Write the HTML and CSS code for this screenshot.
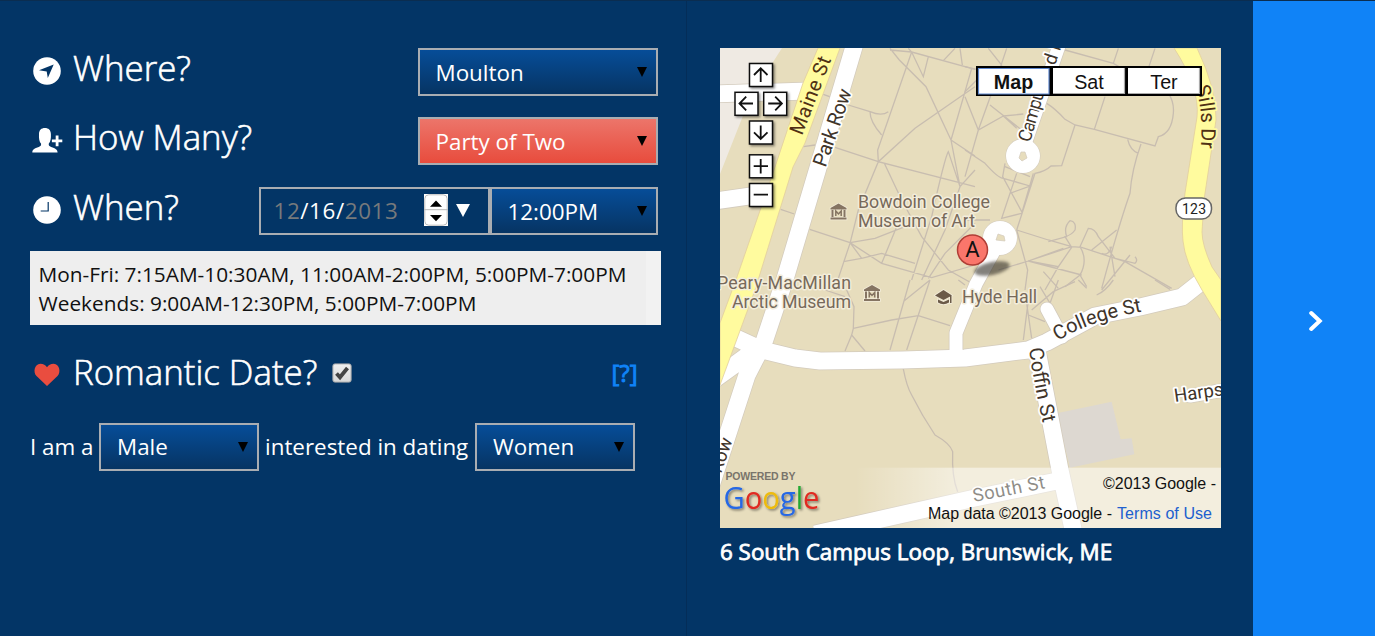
FILE: index.html
```html
<!DOCTYPE html>
<html lang="en">
<head>
<meta charset="utf-8">
<title>Plan a meal</title>
<link rel="stylesheet" href="styles.css">
</head>
<body>
<main class="page">
  <section class="form">
    <div class="row row-where">
      <h2 class="label"><svg class="icon" viewBox="0 0 30 30"><circle cx="15" cy="15" r="13.8" fill="#fff"/><path d="M21.7 8.5 15.8 22 14.7 15.5 7 14.2Z" fill="#033566"/></svg>Where?</h2>
      <div class="select w240"><span>Moulton</span><i class="caret"></i></div>
    </div>
    <div class="row row-many">
      <h2 class="label"><svg class="icon" viewBox="0 0 30 30"><path d="M.3 27.5c0-3.4 2.200-4 6.500-5.600 2-.8 2.300-1.300 2.300-3.100C7.200 16.800 6.800 13.500 7 9c.1-4 2.300-6 5.900-6s5.900 2 6 6c.2 4.500-.3 7.800-2.200 9.800 0 1.800.5 2.300 2.400 3.100 4.300 1.600 6.400 2.200 6.500 5.600Z" fill="#fff"/><path d="M23.700 10.500h2.800v4h3.800v2.800h-3.800v4h-2.800v-4h-3.800v-2.800h3.800Z" fill="#fff"/></svg>How Many?</h2>
      <div class="select w240 red"><span>Party of Two</span><i class="caret"></i></div>
    </div>
    <div class="row row-when">
      <h2 class="label"><svg class="icon" viewBox="0 0 30 30"><circle cx="15" cy="15" r="13.800" fill="#fff"/><path d="M16.200 7v9H8.700" fill="none" stroke="#033566" stroke-width="1.200"/></svg>When?</h2>
      <div class="datetime">
        <div class="date"><span class="value"><b>12</b>/16/<b>2013</b></span>
          <svg class="spin" viewBox="0 0 24 32"><rect width="24" height="32" fill="#fff"/><rect x=".8" y=".8" width="22.400" height="30.400" rx="4" fill="#fff" stroke="#bbb"/><path d="M0 15.700h24" stroke="#bbb"/><path d="M6 12.700 12 6.500l6 6.200ZM6 21h12l-6 6.200Z"/></svg>
          <i class="drop"></i></div>
        <div class="select w168"><span>12:00PM</span><i class="caret"></i></div>
      </div>
    </div>
    <div class="hours"><div class="lines">Mon-Fri: 7:15AM-10:30AM, 11:00AM-2:00PM, 5:00PM-7:00PM<br>Weekends: 9:00AM-12:30PM, 5:00PM-7:00PM</div></div>
    <div class="row row-romance">
      <h2 class="label"><svg class="icon heart" viewBox="0 0 30 30"><path d="M15 27 4.500 17C.8 13 2.500 5 8.300 4.700c3.200 0 5.200 1.300 6.700 3.600 1.500-2.300 3.500-3.600 6.700-3.600 5.800.3 7.500 8.300 3.800 12.300Z" fill="#e94d3f"/></svg>Romantic Date?</h2>
      <svg class="check" viewBox="0 0 20 20"><defs><linearGradient id="cg" x2="0" y2="1"><stop stop-color="#f0f0f0"/><stop offset="1" stop-color="#d8d8d8"/></linearGradient></defs><rect x=".9" y=".9" width="18.200" height="18.200" rx="2" fill="url(#cg)" stroke="#aaa"/><path d="M4.500 10.500 8 14.300 15.500 5" fill="none" stroke="#444" stroke-width="3.800"/></svg>
      <a class="help">[?]</a>
    </div>
    <div class="dating"><span>I am a</span><div class="select w160"><span>Male</span><i class="caret"></i></div><span class="mid">interested in dating</span><div class="select w160"><span>Women</span><i class="caret"></i></div></div>
  </section>

  <section class="place">
    <svg class="map" viewBox="720 48 501 480">
      <defs>
        <linearGradient id="fade"><stop offset="0" stop-color="#fff" stop-opacity="0"/><stop offset=".28" stop-color="#fff" stop-opacity=".5"/><stop offset="1" stop-color="#fff" stop-opacity=".5"/></linearGradient>
        <filter id="soft" x="-30%" y="-50%" width="160%" height="200%"><feGaussianBlur stdDeviation="1.500"/></filter>
        <filter id="drop" x="-20%" y="-20%" width="150%" height="150%"><feDropShadow dx="1.500" dy="1.500" stdDeviation="1" flood-opacity=".45"/></filter>
        <g id="museum"><path d="M-8-3.500 0-8 8-3.500V-2H-8ZM-7-1.500h2v7h-2ZM5-1.500h2v7H5ZM-8 6H8v2H-8Z"/><path d="M-2.700 4.500V-.5L0 2.500 2.700-.5v5" fill="none" stroke="#857462" stroke-width="1.500"/></g>
        <path id="pSills" d="M1195.500 87 Q1206 119 1198 170"/>
        <path id="pCollege" d="M1058 341Q1089 320 1152 310"/>
        <path id="pCoffin" d="M1029 349Q1033 380 1047 442"/>
      </defs>
      <rect x="720" y="48" width="501" height="480" fill="#e7ddbd"/>
      <path d="M720 48h62L750 98 720 174Z" fill="#efeae3"/>
      <g class="paths" transform="translate(715 40) scale(.333333)">
        <path d="M525 25 553 60 633 140 708 300 735 440M525 30 590 36 780 88M590 36 488 330 490 365 780 440M580 25 590 36 625 110 640 50M685 62 720 25M735 25 742 75M780 140 748 162 600 265 490 365 430 510 405 610 370 715M770 85 748 162 708 300 780 348M325 163 350 172M400 195 465 215Q500 230 520 215M465 215Q465 245 500 285M265 320 300 315M360 322 490 365M197 508 238 522M284 568 405 608 500 670 650 713 780 675M508 370 560 480 620 590 700 690 780 735M735 440 690 570 620 720M735 440 700 335Q690 350 650 530L590 720M735 440 780 390M405 608 440 655 385 665M440 655 500 640 600 670M405 608 480 595 570 560M545 560 500 670M780 550 690 640 640 715"/>
      </g>
      <g class="paths" transform="translate(965 40) scale(.333333)">
        <path d="M0 80 150 115M70 25 110 75 40 270 0 410M125 25 100 100M0 155 60 95M0 170 40 270 115 228 155 265M75 195 170 270M115 228 175 222M245 190Q270 205 300 238L330 255 388 268 570 318 580 290Q620 280 625 220Q628 185 610 160M420 170 388 268M300 30 445 70 480 90M460 25 445 70M570 25 545 100M330 255 290 377 258 378Q240 395 210 400L155 570M488 298Q495 330 520 340M528 312Q500 390 495 460Q460 560 410 745M0 330 60 370Q100 415 115 415L195 438 135 460M120 370 113 410 170 515M155 400 110 535 170 520 205 400M120 380 195 410M75 540H0M155 570 250 600 320 620 350 622 480 665 620 745M250 605 305 590Q295 560 315 542Q335 545 330 570Q320 585 300 590L320 622M320 620 190 663 100 690M295 625 190 663M155 570 188 690 180 750M190 663 350 705M190 663 280 680 320 622M280 680 240 750M345 620Q370 660 345 705L300 740M345 620 370 565Q390 565 400 590L450 655 510 670Q520 660 510 650M410 640Q430 650 440 620M435 620 450 710M380 630 455 570M495 645 410 750M235 695 280 745M345 705 365 740"/>
      </g>
      <g class="paths" transform="translate(715 280) scale(.333333)">
        <path d="M415 145 530 120 610 107 705 137M415 145 410 165 450 213M410 165 390 213M585 0 525 210M645 0 575 210M645 0 568 62M330 30 390 50M395 30 417 80 415 145M730 0 750 15M565 267Q575 320 590 345Q620 405 660 465Q705 490 713 515Q710 590 728 635"/>
      </g>
      <g class="paths" transform="translate(965 280) scale(.333333)">
        <path d="M190 60 175 180M185 70 200 175M190 105 240 125M280 0 255 70 225 20M200 90 265 35 330 5M340 0 365 25M445 0Q420 35 395 45M570 0 615 28"/>
      </g>
      <g transform="translate(965 280) scale(.333333)"><path d="M275 400 440 365 467 478 500 475 508 523 315 563Z" fill="#ddd8d1"/></g>
      <g class="edge">
        <path d="M715 93.800 808 91M715 201 778 192M856 40 785 279 764 342 747 375 708 495M725 333 762 350 795 358 820 361 902 360 965 358 1028 350 1047 342 1095 316 1140 307 1182 297 1201 282M715 379 755 350M1037 350 1060 470 1075 538M815 534 975 498 1057 481"/>
        <path class="thin" d="M1061 40 1023 150M999 242 976 284 956 333V355M1047 309 1062 337M1190 396 1230 389"/>
        <circle cx="1023" cy="156" r="17.500"/><circle cx="1000" cy="238" r="17.500"/>
      </g>
      <g class="road">
        <path d="M715 93.800 808 91M715 201 778 192M856 40 785 279 764 342 747 375 708 495M725 333 762 350 795 358 820 361 902 360 965 358 1028 350 1047 342 1095 316 1140 307 1182 297 1201 282M715 379 755 350M1037 350 1060 470 1075 538M815 534 975 498 1057 481"/>
        <path class="thin" d="M1061 40 1023 150M999 242 976 284 956 333V355M1047 309 1062 337M1190 396 1230 389"/>
        <circle cx="1023" cy="156" r="17"/><circle cx="1000" cy="238" r="17"/>
      </g>
      <path d="M1021 152h4l2 6-5 3-3-3ZM998 234l6 2 1 5-9-1Z" fill="#e7ddbd" stroke="#d3cabb" stroke-width=".7"/>
      <path d="M818 48H840L805 143 793 167 755 290 720 385V323L737 277 773 173 803 83ZM1174 48Q1200 88 1197 117L1185 193Q1181 225 1183 241 1185 262 1202 290L1221 321V280L1212 267Q1202 245 1202 232L1204 200 1216 120Q1217 90 1197 48Z" fill="#fffb9e" stroke="#e2ce9d" stroke-width=".8"/>

      <g class="street">
        <text transform="translate(802 136) rotate(-69)" class="on-yellow big" textLength="82">Maine St</text>
        <text transform="translate(825.500 168) rotate(-71)" class="big" textLength="81">Park Row</text>
        <text transform="translate(1030 143) rotate(-74)" textLength="53">Campu</text>
        <text transform="translate(1055 66) rotate(-72)">d R</text>
        <text class="on-yellow big"><textPath href="#pSills">Sills Dr</textPath></text>
        <text class="big"><textPath href="#pCollege">College St</textPath></text>
        <text class="big"><textPath href="#pCoffin">Coffin St</textPath></text>
        <text transform="translate(1175 402) rotate(-8)">Harps</text>
        <text transform="translate(721 474) rotate(-71)">Row</text>
      </g>
      <g class="poi">
        <text x="858" y="207.500" textLength="132">Bowdoin College</text><text x="858" y="227" textLength="117">Museum of Art</text>
        <text x="717" y="289" textLength="134">Peary-MacMillan</text><text x="732" y="308" textLength="119">Arctic Museum</text>
        <text x="962" y="303" textLength="75">Hyde Hall</text>
      </g>
      <g fill="#857462" class="halo"><use href="#museum" x="838.500" y="211.500"/><use href="#museum" x="872" y="293"/></g>
      <path class="halo" d="M935 295.500 943.500 290 952 295.500 943.500 300ZM938 299.500l5.500 2.500 5.500-2.500v3q-5.500 3.500-11 0ZM950 296h1.500v7H950Z" fill="#6b5a48"/>
      <rect x="1176" y="198" width="35.500" height="21" rx="9.500" fill="#fff" stroke="#666" stroke-width="1.500"/>
      <text x="1182" y="213.500" class="shield" textLength="24">123</text>
      <ellipse cx="992" cy="268.500" rx="18" ry="6.500" transform="rotate(-12 992 268.500)" fill="#332f25" opacity=".6" filter="url(#soft)"/>
      <circle cx="972.500" cy="250" r="15" fill="#fa766b" stroke="#b03e36" stroke-width="1.500"/>
      <text x="972.500" y="257" class="pin">A</text>
      <text transform="translate(974 502) rotate(-11)" class="south" textLength="73">South St</text>
      <rect x="855" y="467.700" width="366" height="61" fill="url(#fade)"/>
      <g class="credit"><text x="1103" y="488.500" textLength="113">©2013 Google -</text><text x="928" y="519" textLength="184">Map data ©2013 Google -</text><text x="1117" y="519" fill="#2060cf" textLength="95">Terms of Use</text></g>
      <text x="725.500" y="480" class="powered" textLength="70">POWERED BY</text>
      <text x="723.500" y="508.500" class="google" filter="url(#drop)" textLength="96" lengthAdjust="spacingAndGlyphs"><tspan fill="#2567e5">G</tspan><tspan fill="#e02b20">o</tspan><tspan fill="#eebb0a">o</tspan><tspan fill="#2567e5">g</tspan><tspan fill="#22a833">l</tspan><tspan fill="#e02b20">e</tspan></text>
      <g class="control" filter="url(#drop)">
        <rect x="749.500" y="63.500" width="23" height="23"/><rect x="735" y="92.300" width="23" height="23"/><rect x="763.700" y="92.300" width="23" height="23"/><rect x="749.500" y="121" width="23" height="23"/><rect x="749.500" y="154.800" width="23" height="23"/><rect x="749.500" y="183.500" width="23" height="23"/>
      </g>
      <path class="glyph" d="M760.700 82V68.500M754 75l6.700-6.700L767.500 75M753 103.500H739.500M746.200 96.700l-6.700 6.800 6.700 6.800M768.200 103.500H782M775.200 96.700l6.700 6.800-6.700 6.800M760.700 125.500V139M754 132.300l6.700 6.700 6.800-6.700M753.700 166.200H768M760.700 159V173.500M753.700 194.700H768"/>
      <g class="types">
        <path d="M976 66h226v30H976Z" fill="#000"/>
        <path d="M978 68h71v26h-71ZM1053 68h71v26h-71ZM1128 68h72v26h-72Z" fill="#fff"/>
        <path d="M978.500 68.500h70.500v25.500h-70.500Z" fill="none" stroke="#6089cf" stroke-width="1.200"/>
        <path d="M1053 93.500h71.500V68M1128 93.500h71.500V68" fill="none" stroke="#aaa" stroke-width="1.200"/>
        <text x="1013.500" y="88.500" font-weight="bold">Map</text><text x="1089" y="88.500">Sat</text><text x="1164" y="88.500">Ter</text>
      </g>
    </svg>
    <p class="address">6 South Campus Loop, Brunswick, ME</p>
  </section>

  <a class="next"><svg viewBox="0 0 14 22"><path d="M2.200 3 10.700 11 2.200 19" fill="none" stroke="#fff" stroke-width="4" stroke-linecap="round" stroke-linejoin="miter"/></svg></a>
</main>
</body>
</html>
```
FILE: styles.css
```css
* { box-sizing: border-box; }
body { margin: 0; background: #033566; color: #fff; font-family: "Open Sans", sans-serif; }
.page { display: flex; width: 1375px; height: 636px; overflow: hidden; border-top: 1px solid #0b2d50; }
.form { width: 687px; padding: 47px 29px 0 30px; border-right: 1px solid #042d58; }
.row { display: flex; justify-content: space-between; width: 627.5px; height: 49px; }
.row-many { margin-top: 20px; }
.row-when { margin-top: 21px; }
.label { display: flex; align-items: center; margin: 0; height: 39px; font-size: 34.8px; font-weight: 300; white-space: nowrap; -webkit-text-stroke: .6px #fff; }
.icon { width: 30px; height: 30px; margin: 6px 11px 0 2px; overflow: visible; }
.heart { margin-top: 4px; }
.select { display: flex; align-items: center; justify-content: space-between; height: 48px; padding: 0 9px 0 16px; border: 2px solid #a9adb2; background: linear-gradient(#064d98, #063463); white-space: nowrap; }
.w240 { width: 240px; }
.w168 { width: 168px; }
.w160 { width: 160px; }
.select, .value, .dating { font-size: 22.4px; }
.red { background: linear-gradient(#ec756a, #e84c3d); }
.caret { border: 5px solid transparent; border-top: 10px solid #000; border-bottom: 0; }
.datetime { display: flex; }
.date { display: flex; align-items: center; width: 231px; height: 48px; padding: 0 0 2px 13px; border: 2px solid #a9adb2; }
.value { width: 150px; letter-spacing: .6px; }
.value b { color: #777a7c; font-weight: inherit; }
.spin { width: 24px; height: 32px; }
.drop { margin-left: 8px; border: 7px solid transparent; border-top: 13px solid #fff; border-bottom: 0; }
.hours { width: 631px; height: 74px; margin-top: 15px; padding-right: 15px; background: #f2f2f2; color: #111; font-size: 20.82px; line-height: 29px; white-space: nowrap; }
.lines { height: 74px; padding: 8.5px; background: #eee; }
.row-romance { justify-content: flex-start; margin-top: 27px; }
.check { width: 20px; height: 20px; margin: 11px 0 0 15px; }
.help { margin: 4px 20px 0 auto; color: #1083f7; font-size: 24px; font-weight: 400; -webkit-text-stroke: .9px; }
.dating { display: flex; align-items: center; margin-top: 21.5px; white-space: nowrap; }
.dating > span { width: 69px; }
.dating > .mid { width: 216px; padding-left: 6px; }
.place { width: 566px; padding: 47px 0 0 33px; }
.map { display: block; width: 501px; height: 480px; overflow: hidden; }
.address { margin: 9px 0 0; font-size: 22.4px; font-weight: 400; line-height: 30px; white-space: nowrap; -webkit-text-stroke: .8px #fff; }
.next { display: flex; align-items: center; justify-content: center; width: 122px; padding-top: 5px; background: #1083f7; }
.next svg { width: 14px; height: 22px; margin-left: 3px; }

.paths path { fill: none; stroke: #c8bdb0; stroke-width: 3.9; }
.edge { fill: #d3cbbd; stroke: #d3cbbd; stroke-width: 18.5; stroke-linejoin: round; }
.road { fill: #fff; stroke: #fff; stroke-width: 17; stroke-linejoin: round; }
.edge path, .road path { fill: none; }
.edge circle, .road circle { stroke: none; }
.edge .thin { stroke-width: 14.5; stroke-linecap: round; }
.road .thin { stroke-width: 13; stroke-linecap: round; }
.street text { fill: #40342a; stroke: #fff; stroke-width: 3.5px; paint-order: stroke; stroke-linejoin: round; font: 18.5px Roboto, sans-serif; }
.street .big { font-size: 20px; }
.street .on-yellow { fill: #4f3014; stroke: #fffb9e; }
.poi text { fill: #77695a; stroke: #f3eddb; stroke-width: 3px; paint-order: stroke; stroke-linejoin: round; font: 17.8px Roboto, sans-serif; }
.halo { stroke: #f3eddb; stroke-width: 1.5px; paint-order: stroke; }
.shield { fill: #222; font: 14px Roboto, sans-serif; }
.pin { fill: #111; font: 22px Roboto, sans-serif; text-anchor: middle; }
.south { fill: #20180e; stroke: #fff; stroke-width: 3px; paint-order: stroke; font: 18.5px Roboto, sans-serif; }
.credit { fill: #111; font: 16px "Liberation Sans", sans-serif; }
.powered { fill: #79746b; font: bold 10.5px "Liberation Sans", sans-serif; }
.google { font: 500 31px "Open Sans", sans-serif; }
.control rect { fill: #fff; stroke: #111; stroke-width: 1.5; }
.glyph { fill: none; stroke: #111; stroke-width: 1.8; }
.types text { fill: #111; font-family: "Liberation Sans", sans-serif; font-size: 19.7px; text-anchor: middle; }
```
